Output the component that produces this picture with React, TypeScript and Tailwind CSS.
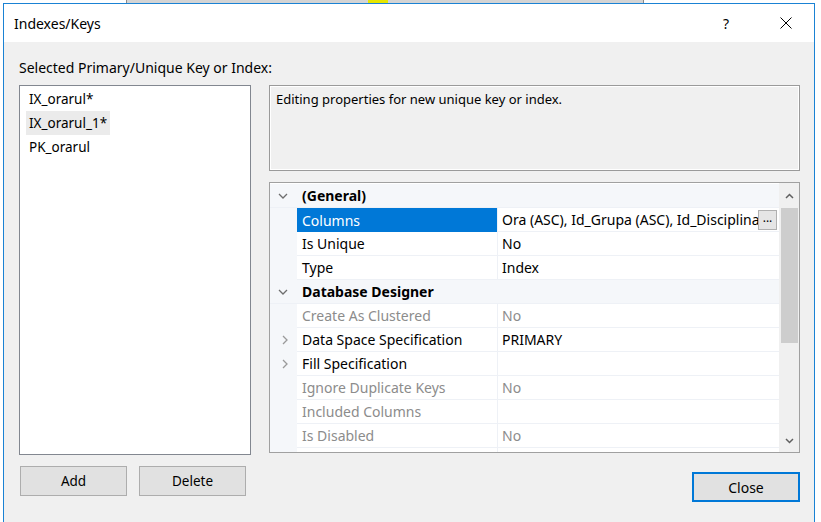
import React from 'react'

type Row = {
  name: string
  value?: string
  kind?: 'category' | 'prop'
  disabled?: boolean
  expandable?: boolean
  selected?: boolean
  ellipsis?: boolean
}

const rows: Row[] = [
  { name: '(General)', kind: 'category' },
  { name: 'Columns', value: 'Ora (ASC), Id_Grupa (ASC), Id_Disciplina (ASC)', selected: true, ellipsis: true },
  { name: 'Is Unique', value: 'No' },
  { name: 'Type', value: 'Index' },
  { name: 'Database Designer', kind: 'category' },
  { name: 'Create As Clustered', value: 'No', disabled: true },
  { name: 'Data Space Specification', value: 'PRIMARY', expandable: true },
  { name: 'Fill Specification', value: '', expandable: true },
  { name: 'Ignore Duplicate Keys', value: 'No', disabled: true },
  { name: 'Included Columns', value: '', disabled: true },
  { name: 'Is Disabled', value: 'No', disabled: true },
  { name: '', value: '', disabled: true },
]

function ChevronDown() {
  return (
    <svg width="10" height="6" viewBox="0 0 10 6" fill="none" stroke="#6e6e6e" strokeWidth={1.3}>
      <path d="M1 1l4 4 4-4" />
    </svg>
  )
}

function ChevronRight() {
  return (
    <svg width="6" height="10" viewBox="0 0 6 10" fill="none" stroke="#9a9a9a" strokeWidth={1.3}>
      <path d="M1 1l4 4-4 4" />
    </svg>
  )
}

function PropertyRow({ row }: { row: Row }) {
  if (row.kind === 'category') {
    return (
      <div className="flex h-[24px] shrink-0 items-center bg-[#f5f7fa] border-b border-[#eef1f6]">
        <div className="w-[26px] flex justify-center">
          <ChevronDown />
        </div>
        <span className="font-bold text-black pl-[6px]">{row.name}</span>
      </div>
    )
  }
  return (
    <div className="flex h-[24px] shrink-0 items-stretch">
      <div className="w-[27px] bg-[#f5f7fa] flex items-center justify-center pl-[2px]">
        {row.expandable && <ChevronRight />}
      </div>
      <div
        className={
          row.selected
            ? 'w-[200px] flex items-center pl-[5px] bg-[#0078d7] text-white'
            : `w-[200px] flex items-center pl-[5px] bg-white border-b border-[#eef1f6] ${row.disabled ? 'text-[#8c8c8c]' : 'text-black'}`
        }
      >
        {row.name}
      </div>
      <div className="w-px bg-[#eef1f6]" />
      <div
        className={`flex-1 min-w-0 flex items-center pl-[4px] bg-white border-b border-[#eef1f6] ${row.disabled ? 'text-[#8c8c8c]' : 'text-black'}`}
      >
        <span className="flex-1 min-w-0 whitespace-nowrap overflow-hidden">{row.value}</span>
        {row.ellipsis && (
          <span className="w-[19px] h-[20px] mr-[2px] shrink-0 bg-[#e5e5e5] border border-[#b0b0b0] flex items-center justify-center text-[12px] leading-none pb-[4px] text-black">
            ...
          </span>
        )}
      </div>
    </div>
  )
}

export default function App() {
  return (
    <div
      className="w-[821px] h-[522px] bg-white relative overflow-hidden text-[14px]"
      style={{ fontFamily: '"Noto Sans", "Open Sans", sans-serif' }}
    >
      {/* window behind the dialog */}
      <div className="absolute top-0 left-[126px] w-[518px] h-[3px] bg-[#d4d4d4] border-x border-[#8a8a8a]" />
      <div className="absolute top-0 left-[368px] w-[20px] h-[3px] bg-[#e6e600]" />

      <div className="absolute left-[3px] top-[3px] w-[812px] h-[520px] border border-[#1a82d4] flex flex-col bg-[#f0f0f0]">
        {/* Title bar */}
        <div className="h-[38px] bg-white flex items-center shrink-0">
          <span className="pl-[10px] text-[14px] text-black">Indexes/Keys</span>
          <span className="ml-auto mr-[51px] text-[14px] text-black">?</span>
          <svg className="mr-[22px]" width="12" height="12" viewBox="0 0 12 12" stroke="#000" strokeWidth={1}>
            <path d="M0.5 0.5l11 11M11.5 0.5l-11 11" />
          </svg>
        </div>

        {/* Body */}
        <div className="flex-1 pl-[15px] pr-[13px] pt-[17px]">
          <div className="h-[17px] leading-[17px] text-black">Selected Primary/Unique Key or Index:</div>
          <div className="flex gap-[18px] mt-[9px]">
            {/* Left column */}
            <div className="w-[232px] shrink-0 flex flex-col">
              <div className="h-[370px] bg-white border border-[#828790] pt-[1px] pl-[6px] text-[13.5px]">
                <div className="h-[24px] flex items-center px-[3px] text-black w-fit">IX_orarul*</div>
                <div className="h-[24px] flex items-center px-[3px] text-black bg-[#ebebeb] w-fit">IX_orarul_1*</div>
                <div className="h-[24px] flex items-center px-[3px] text-black w-fit">PK_orarul</div>
              </div>
              <div className="flex gap-[12px] mt-[11px] pl-[1px] text-[13.5px]">
                <button className="w-[107px] h-[30px] bg-[#e1e1e1] border border-[#adadad] text-black">Add</button>
                <button className="w-[107px] h-[30px] bg-[#e1e1e1] border border-[#adadad] text-black">Delete</button>
              </div>
            </div>

            {/* Right column */}
            <div className="w-[531px] shrink-0 flex flex-col">
              <div className="h-[86px] border border-[#9a9a9a] shadow-[inset_1px_1px_0_#ffffff,inset_-1px_-1px_0_#ffffff] px-[6px] pt-[4px] text-black text-[13px]">
                Editing properties for new unique key or index.
              </div>

              <div className="h-[271px] mt-[11px] border border-[#a0a0a0] bg-white flex overflow-hidden">
                <div className="flex-1 min-w-0 flex flex-col overflow-hidden pt-[1px]">
                  {rows.map((r, i) => (
                    <PropertyRow key={i} row={r} />
                  ))}
                </div>
                {/* Scrollbar */}
                <div className="w-[20px] bg-[#f0f0f0] flex flex-col items-center shrink-0">
                  <div className="h-[25px] w-full flex items-center justify-center">
                    <svg width="9" height="6" viewBox="0 0 9 6" fill="none" stroke="#606060" strokeWidth={1.5}>
                      <path d="M1 5l3.5-3.5L8 5" />
                    </svg>
                  </div>
                  <div className="w-[17px] h-[135px] bg-[#cdcdcd]" />
                  <div className="flex-1" />
                  <div className="h-[22px] w-full flex items-center justify-center">
                    <svg width="9" height="6" viewBox="0 0 9 6" fill="none" stroke="#606060" strokeWidth={1.5}>
                      <path d="M1 1l3.5 3.5L8 1" />
                    </svg>
                  </div>
                </div>
              </div>

              <div className="flex justify-end mt-[19px]">
                <button className="w-[108px] h-[30px] bg-[#e1e1e1] border-2 border-[#0078d7] text-black">Close</button>
              </div>
            </div>
          </div>
        </div>
      </div>
    </div>
  )
}
